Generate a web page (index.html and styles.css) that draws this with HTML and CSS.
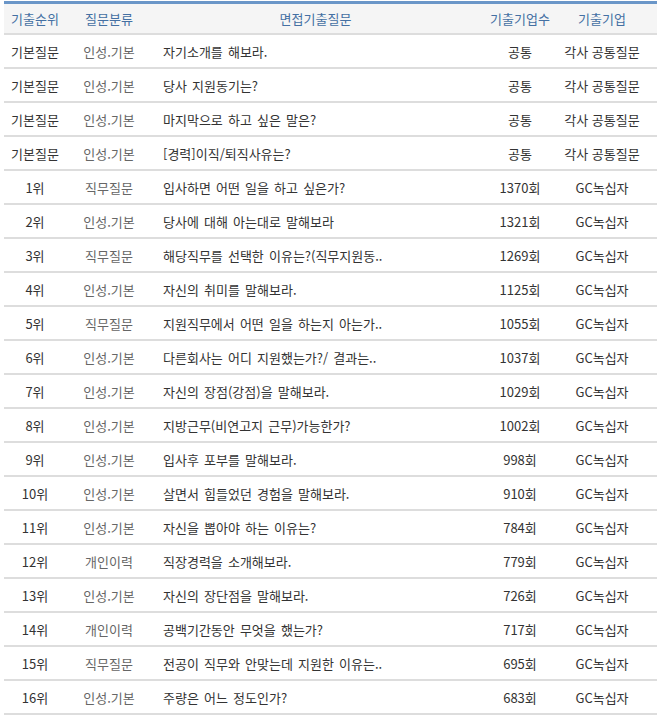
FILE: index.html
```html
<!DOCTYPE html>
<html lang="ko">
<head>
<meta charset="utf-8">
<link rel="stylesheet" href="styles.css">
</head>
<body>
<table class="qtable">
  <colgroup>
    <col class="c-rank"><col class="c-cat"><col class="c-q"><col class="c-cnt"><col class="c-co">
  </colgroup>
  <thead>
    <tr><th>기출순위</th><th>질문분류</th><th>면접기출질문</th><th>기출기업수</th><th class="co">기출기업</th></tr>
  </thead>
  <tbody>
    <tr><td class="rank">기본질문</td><td class="cat">인성.기본</td><td class="q">자기소개를 해보라.</td><td class="cnt">공통</td><td class="co">각사 공통질문</td></tr>
    <tr><td class="rank">기본질문</td><td class="cat">인성.기본</td><td class="q">당사 지원동기는?</td><td class="cnt">공통</td><td class="co">각사 공통질문</td></tr>
    <tr><td class="rank">기본질문</td><td class="cat">인성.기본</td><td class="q">마지막으로 하고 싶은 말은?</td><td class="cnt">공통</td><td class="co">각사 공통질문</td></tr>
    <tr><td class="rank">기본질문</td><td class="cat">인성.기본</td><td class="q">[경력]이직/퇴직사유는?</td><td class="cnt">공통</td><td class="co">각사 공통질문</td></tr>
    <tr><td class="rank">1위</td><td class="cat">직무질문</td><td class="q">입사하면 어떤 일을 하고 싶은가?</td><td class="cnt">1370회</td><td class="co">GC녹십자</td></tr>
    <tr><td class="rank">2위</td><td class="cat">인성.기본</td><td class="q">당사에 대해 아는대로 말해보라</td><td class="cnt">1321회</td><td class="co">GC녹십자</td></tr>
    <tr><td class="rank">3위</td><td class="cat">직무질문</td><td class="q">해당직무를 선택한 이유는?(직무지원동..</td><td class="cnt">1269회</td><td class="co">GC녹십자</td></tr>
    <tr><td class="rank">4위</td><td class="cat">인성.기본</td><td class="q">자신의 취미를 말해보라.</td><td class="cnt">1125회</td><td class="co">GC녹십자</td></tr>
    <tr><td class="rank">5위</td><td class="cat">직무질문</td><td class="q">지원직무에서 어떤 일을 하는지 아는가..</td><td class="cnt">1055회</td><td class="co">GC녹십자</td></tr>
    <tr><td class="rank">6위</td><td class="cat">인성.기본</td><td class="q">다른회사는 어디 지원했는가?/ 결과는..</td><td class="cnt">1037회</td><td class="co">GC녹십자</td></tr>
    <tr><td class="rank">7위</td><td class="cat">인성.기본</td><td class="q">자신의 장점(강점)을 말해보라.</td><td class="cnt">1029회</td><td class="co">GC녹십자</td></tr>
    <tr><td class="rank">8위</td><td class="cat">인성.기본</td><td class="q">지방근무(비연고지 근무)가능한가?</td><td class="cnt">1002회</td><td class="co">GC녹십자</td></tr>
    <tr><td class="rank">9위</td><td class="cat">인성.기본</td><td class="q">입사후 포부를 말해보라.</td><td class="cnt">998회</td><td class="co">GC녹십자</td></tr>
    <tr><td class="rank">10위</td><td class="cat">인성.기본</td><td class="q">살면서 힘들었던 경험을 말해보라.</td><td class="cnt">910회</td><td class="co">GC녹십자</td></tr>
    <tr><td class="rank">11위</td><td class="cat">인성.기본</td><td class="q">자신을 뽑아야 하는 이유는?</td><td class="cnt">784회</td><td class="co">GC녹십자</td></tr>
    <tr><td class="rank">12위</td><td class="cat">개인이력</td><td class="q">직장경력을 소개해보라.</td><td class="cnt">779회</td><td class="co">GC녹십자</td></tr>
    <tr><td class="rank">13위</td><td class="cat">인성.기본</td><td class="q">자신의 장단점을 말해보라.</td><td class="cnt">726회</td><td class="co">GC녹십자</td></tr>
    <tr><td class="rank">14위</td><td class="cat">개인이력</td><td class="q">공백기간동안 무엇을 했는가?</td><td class="cnt">717회</td><td class="co">GC녹십자</td></tr>
    <tr><td class="rank">15위</td><td class="cat">직무질문</td><td class="q">전공이 직무와 안맞는데 지원한 이유는..</td><td class="cnt">695회</td><td class="co">GC녹십자</td></tr>
    <tr><td class="rank">16위</td><td class="cat">인성.기본</td><td class="q">주량은 어느 정도인가?</td><td class="cnt">683회</td><td class="co">GC녹십자</td></tr>
  </tbody>
</table>
</body>
</html>
```

FILE: styles.css
```css
html, body {
  margin: 0;
  padding: 0;
  background: #ffffff;
}
body {
  padding: 1px 0 0 4px;
  font-family: "Noto Sans CJK KR", "Noto Sans", sans-serif;
  font-size: 13px;
  color: #333333;
}
.qtable {
  border-collapse: collapse;
  table-layout: fixed;
  width: 653px;
  border-top: 3px solid #6a96c8;
}
.c-rank { width: 62px; }
.c-cat { width: 86px; }
.c-q { width: 327px; }
.c-cnt { width: 82px; }
.c-co { width: 96px; }
.qtable thead th {
  background: #f5f5f5;
  color: #4470a3;
  font-weight: normal;
  height: 29px;
  padding: 0;
  border-bottom: 2px solid #dddddd;
  text-align: center;
  line-height: 1;
}
.qtable tbody td {
  height: 32px;
  padding: 0;
  border-bottom: 2px solid #dddddd;
  text-align: center;
  line-height: 1;
  white-space: nowrap;
  overflow: hidden;
}
.qtable th.co { padding-right: 14px; }
.qtable td.rank { color: #333333; }
.qtable td.cat { color: #666666; }
.qtable td.q { text-align: left; padding-left: 11px; color: #333333; word-spacing: 1.5px; }
.qtable td.cnt { color: #333333; }
.qtable td.co { color: #333333; padding-right: 14px; }
```
